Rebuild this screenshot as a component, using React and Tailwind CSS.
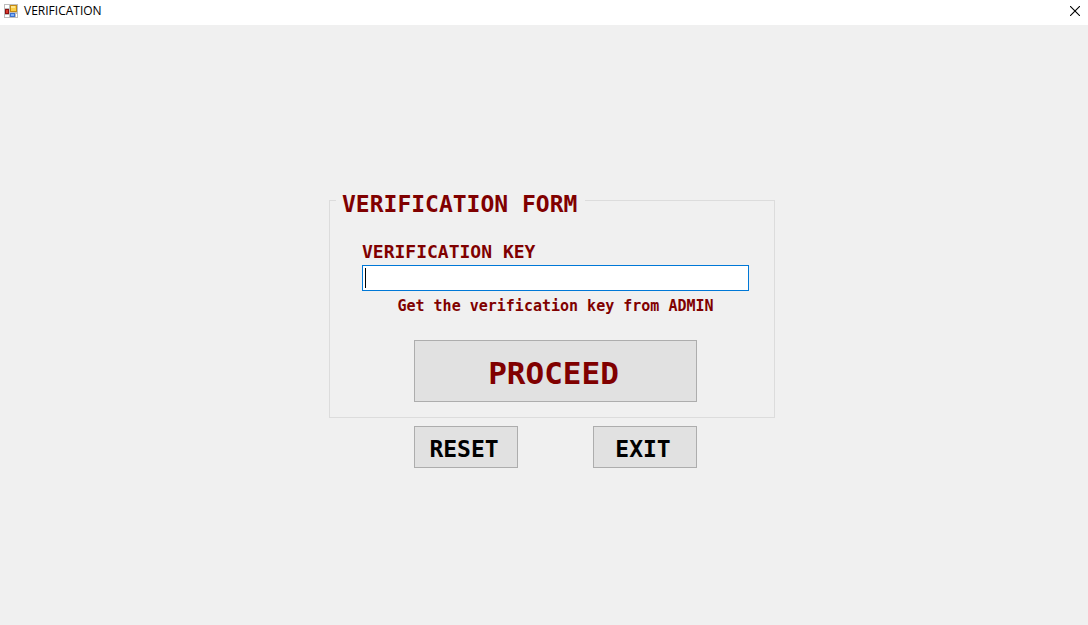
import { useState } from "react";

function AppIcon() {
  return (
    <svg width="14" height="14" viewBox="0 0 14 14" shapeRendering="crispEdges" aria-hidden="true">
      <rect width="14" height="14" fill="#bdbdbd" />
      <rect x="1" y="1" width="4" height="3" fill="#fff" />
      <rect x="1" y="11" width="4" height="2" fill="#fff" />
      <rect x="12" y="10" width="1" height="3" fill="#fff" />
      <rect x="1" y="5" width="4" height="5" fill="#8f1010" />
      <rect x="2" y="6" width="2" height="3" fill="#d8382c" />
      <rect x="6" y="1" width="7" height="7" fill="#c48a14" />
      <rect x="7" y="2" width="5" height="5" fill="#fbcf45" />
      <rect x="7" y="2" width="4" height="2" fill="#ffe58a" />
      <rect x="6" y="9" width="5" height="4" fill="#3a70d0" />
      <rect x="7" y="10" width="3" height="2" fill="#7fb0f6" />
    </svg>
  );
}

function PushButton({ className, ...props }) {
  return (
    <button
      className={`flex items-center justify-center border border-[#adadad] bg-[#e1e1e1] font-bold ${className}`}
      {...props}
    />
  );
}

export default function App() {
  const [key, setKey] = useState("");

  return (
    <div className="flex min-h-screen flex-col bg-[#f0f0f0] font-['DejaVu_Sans_Mono',monospace]">
      <header className="flex h-[25px] items-center bg-white pb-[3px] pl-1 pr-2">
        <AppIcon />
        <h1 className="ml-1.5 flex-1 font-['Open_Sans',sans-serif] text-xs leading-4 text-black">VERIFICATION</h1>
        <button aria-label="Close">
          <svg width="10" height="10" viewBox="0 0 10 10" stroke="#000" strokeWidth="1.1" aria-hidden="true">
            <path d="M0 0L10 10M10 0L0 10" />
          </svg>
        </button>
      </header>

      <main className="flex flex-1 flex-col items-center pl-4 pt-[159px]">
        <form className="w-full max-w-[446px]" onSubmit={(e) => e.preventDefault()}>
          <fieldset className="border border-[#dcdcdc] pb-[15px] pl-8 pr-[25px] font-bold text-[#800000]">
            <legend className="-ml-[26px] pl-1.5 pr-2 pt-2 text-[23px] leading-6">VERIFICATION FORM</legend>
            <label htmlFor="key" className="block pb-[3px] pt-[26px] text-lg leading-5">
              VERIFICATION KEY
            </label>
            <div className="relative">
              <input
                id="key"
                type="text"
                autoFocus
                value={key}
                onChange={(e) => setKey(e.target.value)}
                className="block h-[26px] w-full border border-[#0078d7] bg-white px-0.5 text-base text-black outline-none placeholder-shown:caret-transparent"
                placeholder=" "
              />
              {key === "" && <span className="pointer-events-none absolute left-[3px] top-[3px] h-5 w-px bg-black" />}
            </div>
            <p className="pt-[5px] text-center text-[15px] leading-5">Get the verification key from ADMIN</p>
            <PushButton type="submit" className="mx-auto mt-6 h-[62px] w-[283px] pr-1 pt-1 text-[31px]">
              PROCEED
            </PushButton>
          </fieldset>
          <div className="mt-2 flex justify-between pl-[85px] pr-[78px] text-black">
            <PushButton type="reset" onClick={() => setKey("")} className="h-[42px] w-[104px] pr-1 pt-1 text-[23px]">
              RESET
            </PushButton>
            <PushButton type="button" className="h-[42px] w-[104px] pr-1 pt-1 text-[23px]">
              EXIT
            </PushButton>
          </div>
        </form>
      </main>
    </div>
  );
}
